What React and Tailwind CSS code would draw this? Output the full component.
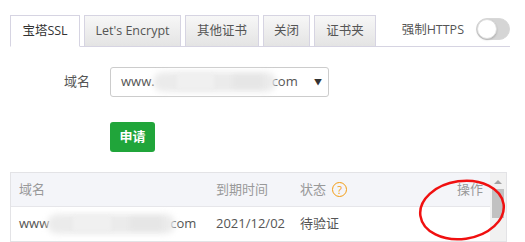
const font = "font-['Open_Sans','Noto_Sans_CJK_SC',sans-serif]";

function Blur({ className }) {
  return (
    <span className={`relative inline-block h-[20px] align-middle ${className}`}>
      <span className="absolute inset-0 rounded-full bg-[#ebebeb] blur-[3px]" />
      <span className="absolute left-[20%] top-[2px] h-[15px] w-[30%] bg-[#f0f0f0] blur-[2px]" />
      <span className="absolute right-[10%] top-[3px] h-[13px] w-[25%] bg-[#e6e6e6] blur-[2px]" />
    </span>
  );
}

export default function App() {
  const tabs = [
    ["宝塔SSL", "w-[70px]", true],
    ["Let's Encrypt", "w-[97px]"],
    ["其他证书", "w-[74px]"],
    ["关闭", "w-[47px]"],
    ["证书夹", "w-[62px]"],
  ];
  return (
    <div className={`relative h-[242px] w-[525px] overflow-hidden bg-white text-[12px] text-[#555] ${font}`}>
      <div className="ml-[10px] mr-[15px] mt-[15px] flex h-[32px] items-stretch border-b border-[#d6d4e2]">
        {tabs.map(([t, w, active]) => (
          <div
            key={t}
            className={`${w} -mb-px mr-[4px] flex items-center justify-center border border-[#d6d4e2] text-[12.5px] ${
              active ? "border-b-white bg-white text-[#333]" : "bg-gradient-to-b from-[#f7f7f7] to-[#e4e4e4] text-[#555]"
            }`}
          >
            {t}
          </div>
        ))}
        <div className="ml-auto flex items-start pt-[3px]">
          <span className="mr-[12px] pt-[3px] text-[12.5px] text-[#555]">强制HTTPS</span>
          <div className="relative h-[22px] w-[34px] rounded-full border border-[#d8d8d8] bg-[#d5d5d5]">
            <div className="absolute left-0 top-0 h-[20px] w-[20px] rounded-full border border-[#ddd] bg-white shadow-[0_1px_2px_rgba(0,0,0,0.2)]" />
          </div>
        </div>
      </div>

      <div className="mt-[20px] flex items-center">
        <span className="w-[90px] text-right text-[13px] text-[#555]">域名</span>
        <div className="ml-[20px] flex h-[30px] w-[219px] items-center rounded-[3px] border border-[#ccc] pl-[10px] pr-[6px] text-[13px] text-[#555]">
          <span>www.</span>
          <Blur className="-ml-[2px] w-[123px]" />
          <span className="-ml-[4px]">com</span>
          <span className="ml-auto text-[8px] text-[#333]">▼</span>
        </div>
      </div>

      <div className="ml-[110px] mt-[25px]">
        <button className="flex h-[30px] w-[45px] items-center justify-center rounded-[3px] bg-[#20a53a] text-[13px] font-semibold text-white">
          申请
        </button>
      </div>

      <div className="ml-[10px] mt-[20px] flex w-[497px] border border-[#e3e3e6]">
        <div className="flex-1">
          <div className="flex h-[34px] items-center border-b border-[#e6e6ea] bg-[#f4f5f9] text-[13px] text-[#999]">
            <span className="w-[205px] pl-[8px]">域名</span>
            <span className="w-[84px]">到期时间</span>
            <span className="flex items-center">
              状态
              <span className="ml-[6px] flex h-[15px] w-[15px] items-center justify-center rounded-full border border-[#f39c12] text-[11px] leading-none text-[#f39c12]">
                ?
              </span>
            </span>
            <span className="ml-auto pr-[7px]">操作</span>
          </div>
          <div className="flex h-[34px] items-center text-[13px] text-[#555]">
            <span className="flex w-[205px] items-center pl-[8px]">
              www
              <Blur className="-ml-[2px] w-[128px]" />
              <span className="-ml-[5px]">com</span>
            </span>
            <span className="w-[84px]">2021/12/02</span>
            <span>待验证</span>
          </div>
        </div>
        <div className="flex w-[16px] flex-col items-center bg-[#f1f1f1]">
          <div className="mt-[7px] h-0 w-0 border-x-[4px] border-b-[4px] border-x-transparent border-b-[#a3a3a3]" />
          <div className="mt-[5px] h-[29px] w-[12px] bg-[#c1c1c1]" />
        </div>
      </div>

      <svg className="absolute left-[414px] top-[176px]" width="96" height="68" viewBox="0 0 96 68">
        <ellipse cx="48" cy="34" rx="42" ry="29" transform="rotate(-8 48 34)" fill="none" stroke="#f01010" strokeWidth="2.5" />
      </svg>
    </div>
  );
}
